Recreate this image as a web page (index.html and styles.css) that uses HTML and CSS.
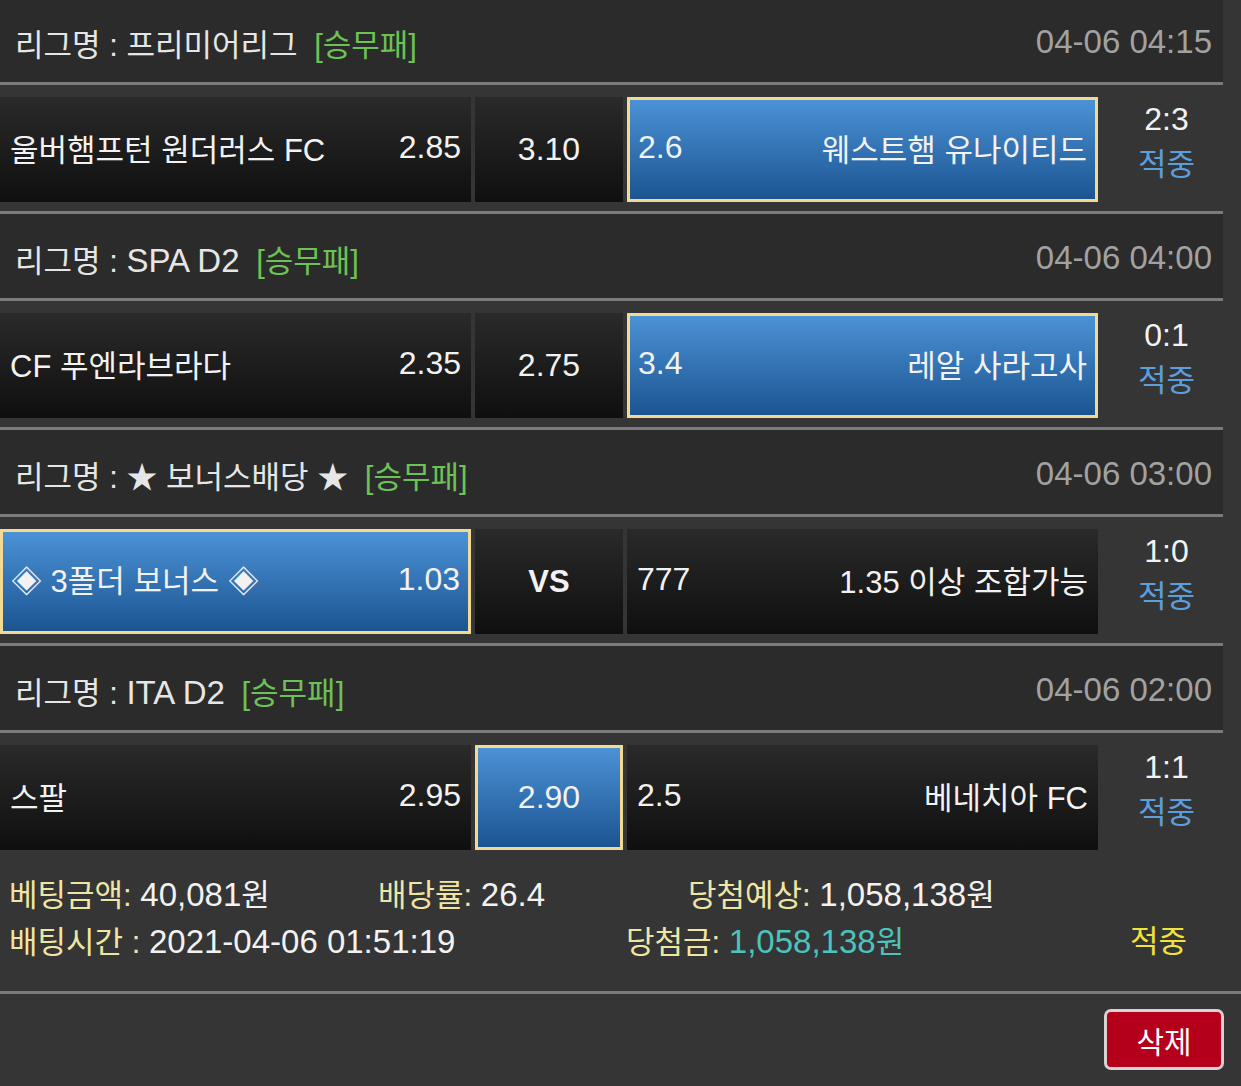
FILE: index.html
```html
<!DOCTYPE html>
<html lang="ko">
<head>
  <meta charset="UTF-8" />
  <meta name="viewport" content="width=device-width, initial-scale=1.0" />
  <title>베팅내역</title>
  <link rel="stylesheet" href="styles.css">
</head>
<body>
  <div class="slip">
    <div class="games">
      <div class="league">
        <div class="league-name">리그명 : 프리미어리그 <span class="type">[승무패]</span></div>
        <div class="league-time num">04-06 04:15</div>
      </div>
      <div class="match">
        <div class="pick"><span>울버햄프턴 원더러스 FC</span><span class="num">2.85</span></div>
        <div class="pick draw num">3.10</div>
        <div class="pick selected"><span class="num">2.6</span><span>웨스트햄 유나이티드</span></div>
        <div class="result"><span class="num">2:3</span><span class="status">적중</span></div>
      </div>

      <div class="league">
        <div class="league-name">리그명 : <span class="num">SPA D2</span> <span class="type">[승무패]</span></div>
        <div class="league-time num">04-06 04:00</div>
      </div>
      <div class="match">
        <div class="pick"><span>CF 푸엔라브라다</span><span class="num">2.35</span></div>
        <div class="pick draw num">2.75</div>
        <div class="pick selected"><span class="num">3.4</span><span>레알 사라고사</span></div>
        <div class="result"><span class="num">0:1</span><span class="status">적중</span></div>
      </div>

      <div class="league">
        <div class="league-name">리그명 : ★ 보너스배당 ★ <span class="type">[승무패]</span></div>
        <div class="league-time num">04-06 03:00</div>
      </div>
      <div class="match">
        <div class="pick selected"><span>◈ 3폴더 보너스 ◈</span><span class="num">1.03</span></div>
        <div class="pick draw vs">VS</div>
        <div class="pick"><span class="num">777</span><span>1.35 이상 조합가능</span></div>
        <div class="result"><span class="num">1:0</span><span class="status">적중</span></div>
      </div>

      <div class="league">
        <div class="league-name">리그명 : <span class="num">ITA D2</span> <span class="type">[승무패]</span></div>
        <div class="league-time num">04-06 02:00</div>
      </div>
      <div class="match last">
        <div class="pick"><span>스팔</span><span class="num">2.95</span></div>
        <div class="pick draw selected num">2.90</div>
        <div class="pick"><span class="num">2.5</span><span>베네치아 FC</span></div>
        <div class="result"><span class="num">1:1</span><span class="status">적중</span></div>
      </div>
    </div>

    <div class="summary">
      <div class="summary-row">
        <span class="col-a"><span class="label">베팅금액:</span> <span class="num">40,081</span>원</span>
        <span class="col-b"><span class="label">배당률:</span> <span class="num">26.4</span></span>
        <span><span class="label">당첨예상:</span> <span class="num">1,058,138</span>원</span>
      </div>
      <div class="summary-row">
        <span class="col-c"><span class="label">배팅시간 :</span> <span class="num">2021-04-06 01:51:19</span></span>
        <span class="col-d"><span class="label">당첨금:</span> <span class="win-amount"><span class="num">1,058,138</span>원</span></span>
        <span class="hit">적중</span>
      </div>
    </div>

    <div class="actions">
      <button class="btn-delete">삭제</button>
    </div>
  </div>
</body>
</html>
```

FILE: styles.css
```css
:root {
  --page: #353535;
  --band: #2b2b2b;
  --line: #7b7b7b;
  --text: #f2f2f2;
  --green: #6cc254;
  --blue-text: #5c9fdd;
  --label: #efe6a6;
}

body {
  margin: 0;
  background-color: var(--page);
  color: var(--text);
  font-family: "Liberation Sans", "Noto Sans CJK KR", sans-serif;
  font-size: 31px;
}

.num {
  font-size: 32px;
}

.games {
  width: 1223px;
  margin-top: -2px;
}

.league {
  display: flex;
  justify-content: space-between;
  align-items: center;
  height: 80px;
  padding: 4px 11px 0 15px;
  background-color: var(--band);
  border-bottom: 3px solid var(--line);
}

.league-name {
  color: #e6e6e6;
}

.league-name .num {
  font-size: 33px;
}

.league-name .type {
  margin-left: 8px;
  color: var(--green);
}

.league-time {
  color: #a2a2a2;
  font-size: 33px;
}

.match {
  display: grid;
  grid-template-columns: 471px 148px 471px 1fr;
  column-gap: 4px;
  height: 105px;
  padding: 12px 0 9px;
  border-bottom: 3px solid var(--line);
}

.match.last {
  padding-bottom: 0;
  border-bottom: none;
}

.pick {
  display: flex;
  justify-content: space-between;
  align-items: center;
  padding: 0 10px 5px;
  background: linear-gradient(#2a2a2a, #0f0f0f);
}

.pick.draw {
  justify-content: center;
  padding-bottom: 0;
}

.pick.vs {
  font-weight: bold;
}

.pick.selected {
  padding: 0 8px 5px;
  background: linear-gradient(#4b92d6, #1c5491);
  border: 3px solid #f3d991;
}

.pick.draw.selected {
  padding-bottom: 0;
}

.result {
  display: flex;
  flex-direction: column;
  align-items: center;
  padding-left: 8px;
  line-height: 45px;
}

.result .status {
  color: var(--blue-text);
}

.summary {
  padding: 22px 0 25px 9px;
  border-bottom: 3px solid var(--line);
  line-height: 46px;
}

.summary .num {
  font-size: 33px;
}

.summary-row {
  display: flex;
}

.col-a {
  width: 369px;
}

.col-b {
  width: 310px;
}

.col-c {
  width: 617px;
}

.col-d {
  width: 504px;
}

.label {
  color: var(--label);
}

.win-amount {
  color: #4cc3bd;
}

.hit {
  color: #f2e23c;
}

.actions {
  display: flex;
  justify-content: flex-end;
  padding: 15px 17px 0 0;
}

.btn-delete {
  width: 120px;
  height: 61px;
  background-color: #b5001b;
  border: 3px solid #d9d2d2;
  border-radius: 7px;
  color: #fff;
  font-family: inherit;
  font-size: 30px;
  cursor: pointer;
}
```
